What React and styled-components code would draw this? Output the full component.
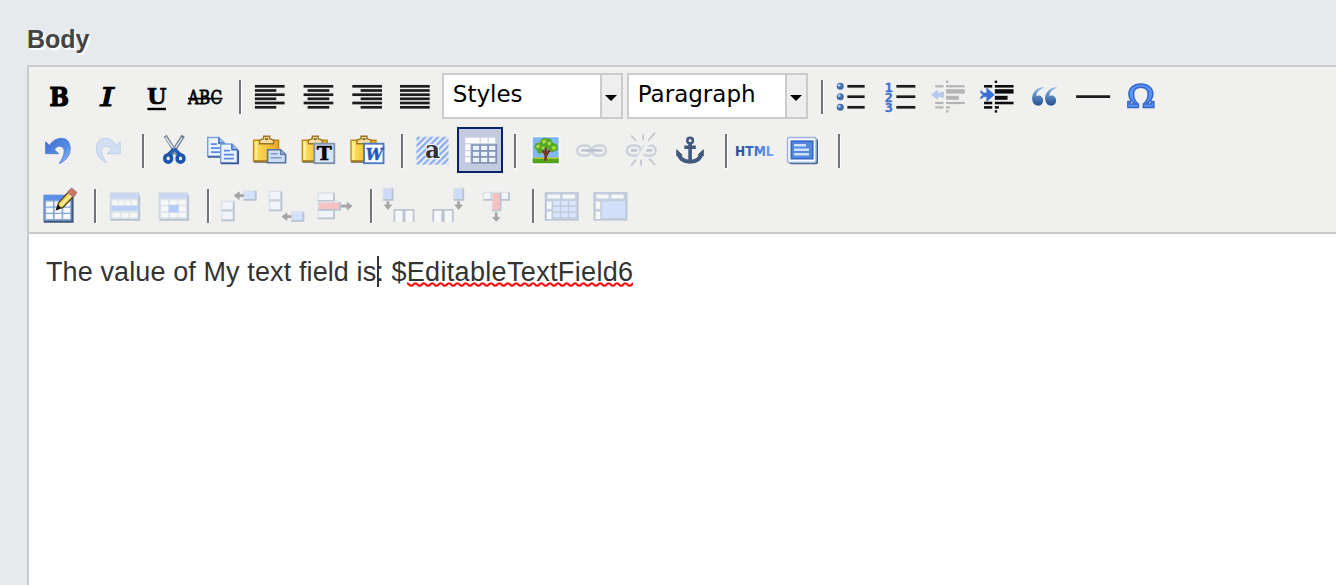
import React from 'react';
import styled, { createGlobalStyle } from 'styled-components';

const GlobalStyle = createGlobalStyle`
  html, body { margin: 0; padding: 0; }
  body { background: #e6eaed; overflow: hidden; font-family: "Liberation Sans", Arial, sans-serif; }
`;

const Page = styled.main`
  display: flex;
  flex-direction: column;
  height: 585px;
  padding-left: 27px;
  box-sizing: border-box;
  overflow: hidden;
`;

const FieldLabel = styled.label`
  height: 41px;
  padding-top: 24px;
  font-size: 25px;
  line-height: 30px;
  font-weight: bold;
  color: #444;
  text-shadow: 2px 2px 0 #fff;
`;

const Editor = styled.section`
  flex: 1;
  display: flex;
  flex-direction: column;
  border: solid #c9cacb;
  border-width: 2px 0 0 2px;
  background: #fff;
`;

const Toolbar = styled.div`
  display: flex;
  flex-direction: column;
  gap: 8.3px;
  height: 159px;
  padding: 6px 0 0 5.85px;
  background: #f0f0ee;
  border-bottom: 2px solid #c9cacb;
`;

const ToolRow = styled.div`
  display: flex;
  align-items: center;
  height: 46px;
  flex: none;
`;

const ToolButton = styled.button`
  flex: none;
  display: grid;
  place-items: center;
  box-sizing: border-box;
  width: 46px;
  height: 46px;
  margin: 0 1.15px;
  padding: 0;
  border: 2px solid ${(p) => (p.$active ? '#0a246a' : 'transparent')};
  background: ${(p) => (p.$active ? '#c2cbe0' : 'transparent')};
`;

const Glyph = styled.svg`
  display: block;
  width: 44px;
  height: 44px;
  margin: -1px;
  overflow: visible;
`;

const Separator = styled.span`
  flex: none;
  width: 2px;
  height: 34px;
  margin: 2px 4.6px 0 ${(p) => p.$before || 10.6}px;
  background: #76717a;
  box-shadow: 1px 1px 0 #fff;
`;

const Select = styled.div`
  flex: none;
  display: flex;
  box-sizing: border-box;
  width: 181px;
  height: 46px;
  margin-left: ${(p) => p.$gap}px;
  border: 2px solid #ccc;
  background: #fff;
`;

const SelectValue = styled.span`
  flex: 1;
  padding-left: 9px;
  font: 23px/38px "DejaVu Sans", Verdana, sans-serif;
  color: #000;
`;

const SelectArrow = styled.span`
  display: flex;
  align-items: center;
  justify-content: center;
  width: 19px;
  border-left: 2px solid #ccc;
  background: #eee;
  &::after {
    content: '';
    margin-top: 4px;
    border: solid transparent;
    border-width: 6px 6px 0;
    border-top-color: #000;
  }
`;

const Content = styled.div`
  flex: 1;
  padding: 22px 0 0 17px;
  font-size: 27px;
  letter-spacing: 0.11px;
  line-height: 32px;
  color: #333;
  white-space: pre;
`;

const Caret = styled.span`
  position: relative;
  &::after {
    content: '';
    position: absolute;
    left: 1px;
    top: -1px;
    width: 2px;
    height: 31px;
    background: #333;
  }
`;

const Misspelled = styled.span`
  position: relative;
  letter-spacing: 0.34px;
`;

const Squiggle = styled.svg`
  position: absolute;
  left: 0;
  top: 25px;
  width: 100%;
  height: 5px;
`;

const INK = '#1c1c1c';
const BLUE = '#3b6fd4';
const SERIF = '"DejaVu Serif", serif';

const Bars = ({ rows, w = 2.7, color = INK }) => (
  <g stroke={color} strokeWidth={w}>
    {rows.map(([x1, x2, y, sw]) => <path key={`${x1}-${y}`} d={`M${x1} ${y}H${x2}`} strokeWidth={sw || w} />)}
  </g>
);

const alignYs = [86.3, 90.5, 94.7, 98.8, 103, 107.3];
const alignBars = (long, short) => alignYs.map((y, i) => [...(i % 2 ? short : long), y]);

const Letter = ({ x, y, size, w, children, ...rest }) => (
  <text x={x} y={y} fontSize={size} textLength={w} lengthAdjust="spacingAndGlyphs" fontFamily={SERIF} fontWeight="bold" fill="#000" {...rest}>{children}</text>
);

const Clipboard = ({ x }) => (
  <g transform={`translate(${x} 135)`}>
    <path d="M1 5.5H26V26H1z" fill="url(#gold)" stroke="#c08a17" strokeWidth="1.4" />
    <path d="M3.5 7V25" stroke="#fff3a2" strokeWidth="2" />
    <path d="M7 9V5.5L11 4V1.5H17V4L21 5.5V9Z" fill="#f5dfa0" stroke="#9b7527" strokeWidth="1.4" />
    <path d="M12.5 4.4h3" stroke="#8b6b2d" strokeWidth="2" />
    <path d="M1 27.3H15" stroke="#7a6942" strokeWidth="1.6" />
  </g>
);

const Sheet = ({ x, y }) => (
  <g transform={`translate(${x} ${y})`}>
    <path d="M.8 .8H12L17.5 6V19.5H.8Z" fill="#eaf2ff" stroke="#7ba0dc" strokeWidth="1.5" />
    <path d="M12 1V6.5H17.5" fill="#9bbcf0" stroke="#3668b8" strokeWidth="1.4" />
    <path d="M4 7.5h6M4 11.5h10M4 15.5h10" stroke="#5c8ce0" strokeWidth="1.7" />
    <path d="M1 20.3H18.3V7" fill="none" stroke="#38578f" strokeWidth="1.7" />
  </g>
);

const dent = (o) => [
  [o - 10.5, o - 2.3, 86.3], [o + .3, o + 19, 86.3], [o + .3, o + 19, 91.4, 4.4],
  [o + .3, o + 13, 97.8, 4], [o - 10.5, o - 2.3, 103], [o + .3, o + 19, 103],
  [o - 10.5, o - 2.3, 107.4], [o + .3, o + 4.3, 107.4], [o + .2, o + 2.6, 81.8, 2.4], [o + .2, o + 2.6, 111.4, 2.4],
];

const Cell = ({ x, y, w = 12, h = 9, fill = '#f1f4f8' }) => (
  <g>
    <rect x={x} y={y} width={w} height={h} fill={fill} stroke="#dde2e9" strokeWidth="1.4" />
    <path d={`M${x} ${y + h}h${w}v${-h}`} fill="none" stroke="#b9c3cf" strokeWidth="1.8" />
  </g>
);

const OpenCell = ({ x, y }) => (
  <g>
    <rect x={x} y={y} width="9" height="12" fill="#f6f7f8" />
    <path d={`M${x} ${y + 12}V${y}h9V${y + 12}`} fill="none" stroke="#bcc6d1" strokeWidth="1.8" />
  </g>
);

const PaleTable = ({ x, children }) => (
  <g transform={`translate(${x} 192)`}>
    <rect x=".8" y=".8" width="28" height="26" fill="#dfe5ed" stroke="#ccd7e6" strokeWidth="1.5" />
    <rect x="1" y="1" width="27.5" height="5" fill="#c8d8f2" />
    <path d="M1 27.5H29.5V3" fill="none" stroke="#b8c2cd" strokeWidth="1.8" />
    {children}
  </g>
);

const Grid = ({ x, y, cols, rows, w, h, px, py, fill }) => (
  <g fill={fill}>
    {Array.from({ length: cols * rows }, (_, i) => (
      <rect key={i} x={x + (i % cols) * px} y={y + Math.floor(i / cols) * py} width={w} height={h} rx=".6" />
    ))}
  </g>
);

const GreyArrow = ({ d, head }) => (
  <g><path d={d} stroke="#a5a5a5" strokeWidth="2.8" fill="none" /><path d={head} fill="#a5a5a5" stroke="#a5a5a5" strokeWidth=".8" /></g>
);

const chain = (x, y) => (
  <g transform={`translate(${x} ${y})`} fill="none">
    <path d="M6.5 1.5H10C13 1.5 14.5 4 14.5 6.5S13 11.5 10 11.5H5.5C2.5 11.5 .8 9 .8 6.5S3 1.5 6.5 1.5Z" stroke="#ccd2db" strokeWidth="2.5" />
    <path d="M5 6.5H11" stroke="#bcc4d0" strokeWidth="2.5" />
  </g>
);

/* Every glyph is plotted on one toolbar-sized sheet; a button shows its own 44px window of it. */
const glyphs = {
  bold: <Letter x="49.5" y="106" size="25.5" w="19.5" stroke="#000" strokeWidth="1.2">B</Letter>,
  italic: <Letter x="99.3" y="106" size="25.5" w="14.5" fontWeight="normal" stroke="#000" strokeWidth="1.1" transform="translate(21.5 0) skewX(-12)">I</Letter>,
  underline: <><Letter x="146.5" y="103.5" size="22.5" w="19.5" stroke="#000" strokeWidth=".6">U</Letter><path d="M147 109H165.5" stroke="#000" strokeWidth="2.4" /></>,
  strike: <><Letter x="188" y="104" size="18.5" w="34" fontWeight="normal" stroke="#000" strokeWidth=".8">ABC</Letter><path d="M188 98.6H222.5" stroke="#000" strokeWidth="1.8" /></>,
  left: <Bars rows={alignBars([255.3, 285], [255.3, 276.7])} />,
  center: <Bars rows={alignBars([303.3, 333], [307.3, 329])} />,
  right: <Bars rows={alignBars([352.3, 382], [360.6, 382])} />,
  full: <Bars rows={alignBars([400.3, 430], [400.3, 430])} />,
  bullets: <><Bars rows={[86.3, 96.7, 107.3].map((y) => [847.7, 865, y])} />{[86.3, 96.7, 107.3].map((y) => <g key={y}><circle cx="840.6" cy={y} r="3.5" fill="#416eae" /><circle cx="839.6" cy={y - 1} r="1.4" fill="#b4cbea" /></g>)}</>,
  numbers: <><Bars rows={[86.3, 96.7, 107.3].map((y) => [896, 915, y])} />{[1, 2, 3].map((n) => <Letter key={n} x="884.5" y={81.2 + n * 10.4} size="12" w="8" fill={BLUE} stroke={BLUE} strokeWidth=".3" fontFamily='"DejaVu Sans Mono", monospace'>{n}</Letter>)}</>,
  outdent: <><Bars rows={dent(945.7)} w={2.2} color="#b4b4b4" /><path d="M931 94.8L938 89.5V93L944 91.5V98L938 96.7V100Z" fill="#b6c9ed" /></>,
  indent: <><Bars rows={dent(994.8)} w={2.6} color="#0c0c0c" /><path d="M994.5 94.8L987 88V93H984L981 90.5V93L983.5 94.8L981 96.7V99L984 96.7H987V101.5Z" fill={BLUE} stroke={BLUE} strokeWidth=".6" /></>,
  quote: [1033, 1046].map((x) => <path key={x} d={`M${x + 11} 87C${x + 2} 88 ${x - 1.5} 95 ${x} 101C${x + 1.5} 107.5 ${x + 10.7} 107 ${x + 10.7} 100.5C${x + 10.7} 96 ${x + 6.5} 94.5 ${x + 4} 96C${x + 4} 92 ${x + 7} 89.5 ${x + 11} 88Z`} fill="url(#ink)" />),
  rule: <path d="M1076 96.7H1110" stroke={INK} strokeWidth="2.8" />,
  omega: <path d="M1128 107.5V101.5H1130.5V104H1135.5C1131 101 1129 98 1129 94C1129 88 1134 84 1141 84S1153 88 1153 94C1153 98 1151 101 1146.5 104H1151.5V101.5H1154V107.5H1143.5V104C1147 101.5 1148.3 98.5 1148.3 94C1148.3 89.5 1145.5 87.2 1141 87.2S1133.7 89.5 1133.7 94C1133.7 98.5 1135 101.5 1138.5 104V107.5Z" fill="#5c93f2" stroke="#3468cd" strokeWidth="1.5" />,

  undo: <path d="M45.5 142L49.5 145.5C55 137 66 136.5 69 143C72.5 151 68.5 160.5 59 164C64 157 66.5 149 61.5 147C58.5 145.8 56 147.5 54.5 150L58.5 154H45.5Z" fill="url(#azure)" stroke="#4f7ed8" strokeWidth=".8" />,
  redo: <path d="M120.5 142L116.5 145.5C111 137 101 136.5 98 143C94.5 151 98 159.5 107 163C102 157 99.5 149 104.5 147C107.5 145.8 110 147.5 111.5 150L107.5 154H120.5Z" fill="#d2def2" stroke="#bfcfeb" strokeWidth="1" />,
  cut: <><path d="M165 136L177 155" stroke="#8593a4" strokeWidth="3.8" /><path d="M183 136L171 155" stroke="#677b91" strokeWidth="3.8" /><path d="M165.5 138L176 153M182 138L172 153" stroke="#edf2f8" strokeWidth="1.2" /><path d="M174 149L168 155M174 149L180 155" stroke="#265db0" strokeWidth="3.6" /><g fill="none" stroke="#1c54b1" strokeWidth="3.6"><ellipse cx="168" cy="158.7" rx="3.4" ry="3.7" /><ellipse cx="180.3" cy="158.7" rx="3.4" ry="3.7" /></g></>,
  copy: <><Sheet x={207} y={137} /><Sheet x={220} y={143.5} /></>,
  paste: <><Clipboard x={253} /><path d="M268 150H281L286 155V163H268Z" fill="#cfdef4" stroke="#55749f" strokeWidth="1.6" /><path d="M281 150V155H286" fill="#8ca6cc" stroke="#55749f" /><path d="M271 154h7M271 158h11" stroke="#7d9bc8" strokeWidth="1.5" /></>,
  pasteText: <><Clipboard x={301} /><rect x="314" y="144" width="20" height="19.5" fill="#d9e4f4" stroke="#7d93ad" strokeWidth="1.8" /><Letter x="316.5" y="160.5" size="18.5" w="15" stroke="#000" strokeWidth=".5">T</Letter></>,
  pasteWord: <><Clipboard x={350} /><rect x="364" y="144" width="19.5" height="19.5" fill="#fff" stroke="#4d7bc4" strokeWidth="1.9" /><Letter x="365.7" y="160" size="17.5" w="17" fill="#2359b6" stroke="#2359b6" strokeWidth=".5" fontStyle="italic">W</Letter></>,
  selectAll: <><rect x="417" y="137" width="32" height="28" fill="url(#hatch)" /><Letter x="425.5" y="158.5" size="25" w="15" fill="#333" stroke="#eef2fa" strokeWidth="2.4" paintOrder="stroke">a</Letter></>,
  table: <><rect x="465" y="138" width="30" height="5.5" fill="#fff" /><rect x="465" y="144.5" width="5" height="18" fill="#fff" /><rect x="471" y="144.5" width="26" height="19.5" fill="#8496b3" /><Grid x={472.7} y={146} cols={3} rows={3} w={6.2} h={4.3} px={8.1} py={6} fill="#eaf1ff" /><path d="M465 151H470M465 157H470M480 138V143M488 138V143" stroke="#c6d1e5" strokeWidth="1.2" /></>,
  image: <><rect x="531.5" y="136" width="29" height="29" fill="#fff" /><rect x="533" y="137.5" width="26" height="26" fill="#83b7f2" /><rect x="533" y="158.5" width="26" height="5" fill="#55a51b" /><path d="M534 158.5H559" stroke="#b5c823" strokeWidth="1.5" /><path d="M545.5 161C547 156 546.5 153 540 149.5M546.5 156C547.5 151.5 550 150 554 149M546.5 154L545.5 145" stroke="#73351c" strokeWidth="2.6" fill="none" /><g fill="#57a526"><path d="M541 140L544 138L551 139L553 143L557.5 145L558 150L553 152.5L550 150.5L546 148L543 150L542 154L538 153.5L537 150.5L534.5 148L536 143.5L540 143Z" /></g><g fill="#a4dc3d"><path d="M542 141L546 139.5L546.5 142.5L543.5 144.5Z" /><path d="M547.5 143L551 141.5L551.5 144.5L549 146Z" /><path d="M536 146L539.5 144.5L540.5 147.5L537.5 148.7Z" /><path d="M551.5 147L555.5 146L556.5 149L553.5 150.5Z" /><path d="M542 147L545 146.5L544.5 149L542 149.5Z" /></g></>,
  link: <>{chain(577, 144.2)}{chain(592, 144.2)}<path d="M587 150.7H598" stroke="#bac2ce" strokeWidth="2.6" /></>,
  unlink: <>{chain(626, 144.2)}{chain(641, 144.2)}<path d="M650 140L637 161" stroke="#f0f0ee" strokeWidth="4" /><path d="M643 134.5V140.5M655 133L648 141M631 136L636 141M641 160V166M649 159L655 165.5M636 160L631 166" stroke="#c2c7cf" strokeWidth="1.8" /></>,
  anchor: <g fill="none" stroke="#415a7c" strokeWidth="3.6"><circle cx="690.3" cy="140.8" r="2.8" strokeWidth="2.6" /><path d="M690.3 144V162M684.5 147.5H696" /><path d="M679 154C680 160 684.5 162 690.3 162S700.5 160 701.5 154" strokeWidth="4" /><path d="M677 156.5V150L682.5 155.5M703.5 156.5V150L698 155.5" fill="#415a7c" strokeWidth="1" /></g>,
  html: <text x="735.8" y="156.4" fontSize="14.8" fontWeight="bold" textLength="38.5" lengthAdjust="spacingAndGlyphs" fontFamily='"DejaVu Sans", sans-serif' fill="url(#fade)">HTML</text>,
  fullscreen: <><rect x="789" y="139" width="29" height="25.5" rx="2" fill="#435a79" /><rect x="787.5" y="137.7" width="28.5" height="25" rx="1.5" fill="#f7faff" stroke="#9bb5dc" strokeWidth="1.5" /><rect x="791.3" y="141.5" width="21.5" height="17.5" fill="#5488e0" stroke="#3969c2" strokeWidth="1.6" /><path d="M794 145.5H806M794 150H809M794 154.5H809" stroke="#cfe1ff" strokeWidth="2.4" /></>,

  tableProps: <><rect x="44" y="195" width="28" height="26" fill="#86a5d5" stroke="#6c8bbb" strokeWidth="1.3" /><rect x="44" y="194.5" width="28" height="5" fill="#5c90e6" /><Grid x={46} y={201} cols={3} rows={3} w={7} h={5} px={8.6} py={6.3} fill="#f5f9ff" /><path d="M44 221.3H72.6V196" fill="none" stroke="#3f597a" strokeWidth="2" /><path d="M56.5 209L58.5 202.5L70 190L75 194.5L63 207Z" fill="#f2ce55" stroke="#4b452e" strokeWidth="1.4" /><path d="M61 205L73 192" stroke="#fff0a3" strokeWidth="2" /><path d="M67.5 192L71.5 187.5L77 192L73 196.5Z" fill="#d17563" stroke="#a08078" /><path d="M56 210L58 204L61 207.5Z" fill="#111" /></>,
  rowProps: <PaleTable x={110.3}><Grid x={2.5} y={8} cols={4} rows={1} w={5} h={4.5} px={6.5} py={7} fill="#f7f7f5" /><rect x="1.5" y="13.5" width="27" height="5" fill="#bad0f5" /><Grid x={3} y={20.5} cols={3} rows={1} w={7} h={4.5} px={8.6} py={7} fill="#f7f7f5" /></PaleTable>,
  cellProps: <PaleTable x={158.5}><Grid x={2.5} y={7.8} cols={3} rows={3} w={7} h={4.5} px={8.8} py={6.3} fill="#f7f7f5" /><rect x="10" y="12.5" width="10" height="7.5" fill="#b4cdf6" /></PaleTable>,
  rowBefore: <><Cell x={222} y={201} /><Cell x={222} y={211} /><Cell x={244} y={190.5} fill="#d3e1fb" /><GreyArrow d="M237 195.2H244" head="M234.5 195.2L239.5 191.5V199Z" /></>,
  rowAfter: <><Cell x={270} y={191} /><Cell x={270} y={201} /><Cell x={292} y={211.5} fill="#d3e1fb" /><GreyArrow d="M285 216.2H292" head="M282.5 216.2L287.5 212.5V220Z" /></>,
  rowDelete: <><Cell x={318} y={192.5} w={16} h={8} /><Cell x={318} y={210} w={16} h={8} /><Cell x={318} y={201.5} w={22} h={8} fill="#f5c3c3" /><GreyArrow d="M341 205.7H350" head="M352 205.7L347 202V209.5Z" /></>,
  colBefore: <><Cell x={383.5} y={188} w={9.5} h={11.5} fill="#ccdcfa" /><GreyArrow d="M388.3 201V206" head="M388.3 209L384.7 204.5H392Z" /><OpenCell x={394.8} y={209.5} /><OpenCell x={405} y={209.5} /></>,
  colAfter: <><Cell x={453.5} y={188} w={9.5} h={11.5} fill="#ccdcfa" /><GreyArrow d="M458.3 201V206" head="M458.3 209L454.7 204.5H462Z" /><OpenCell x={433} y={209.5} /><OpenCell x={443.5} y={209.5} /></>,
  colDelete: <><Cell x={483.5} y={192} w={8} h={7.5} /><Cell x={501} y={192} w={8} h={7.5} /><Cell x={492} y={192} w={8.5} h={18} fill="#f5c1c1" /><GreyArrow d="M496.2 212V218" head="M496.2 221L492.5 217H500Z" /></>,
  split: <><rect x="546" y="192.5" width="32.5" height="27" fill="#c5cfdd" stroke="#bac6d7" strokeWidth="1.5" /><Grid x={548} y={194} cols={2} rows={1} w={12.5} h={4} px={15} py={7} fill="#f6f7f7" /><Grid x={547.5} y={201} cols={1} rows={2} w={4.5} h={7.5} px={6} py={10} fill="#f6f7f7" /><Grid x={554} y={200.5} cols={3} rows={3} w={6.3} h={4} px={8} py={6.2} fill="#dae6fd" /></>,
  merge: <><rect x="594" y="192.5" width="32.5" height="27" fill="#c5cfdd" stroke="#bac6d7" strokeWidth="1.5" /><Grid x={596} y={194} cols={2} rows={1} w={12.5} h={4} px={15} py={7} fill="#f6f7f7" /><Grid x={595.5} y={201} cols={1} rows={2} w={4.5} h={7.5} px={6} py={10} fill="#f6f7f7" /><rect x="602" y="201" width="23" height="16.5" fill="#d3e0fa" /></>,
};

const groups = (spec) => spec.map(([start, names]) => names.map((name, i) => ({ name, cx: start + i * 48.3 })));

const row1 = groups([
  [59, ['bold', 'italic', 'underline', 'strike']],
  [269.4, ['left', 'center', 'right', 'full']],
  [851.35, ['bullets', 'numbers', 'outdent', 'indent', 'quote', 'rule', 'omega']],
]);
const row2 = groups([
  [59, ['undo', 'redo']],
  [172.8, ['cut', 'copy', 'paste', 'pasteText', 'pasteWord']],
  [431.5, ['selectAll', 'table']],
  [545.3, ['image', 'link', 'unlink', 'anchor']],
  [755.7, ['html', 'fullscreen']],
]);
const row3 = groups([
  [59, ['tableProps']],
  [124.5, ['rowProps', 'cellProps']],
  [238.3, ['rowBefore', 'rowAfter', 'rowDelete']],
  [400.4, ['colBefore', 'colAfter', 'colDelete']],
  [562.5, ['split', 'merge']],
]);

const Group = ({ items, cy }) => items.map(({ name, cx }) => (
  <ToolButton key={name} type="button" aria-label={name} $active={name === 'table'}>
    <Glyph viewBox={`${cx - 22} ${cy - 22} 44 44`}>{glyphs[name]}</Glyph>
  </ToolButton>
));

const Defs = styled.svg`
  position: absolute;
  width: 0;
  height: 0;
`;

export default function App() {
  return (
    <>
      <GlobalStyle />
      <Defs aria-hidden="true">
        <defs>
          <linearGradient id="gold"><stop stopColor="#ffe55f" /><stop offset="1" stopColor="#eaa526" /></linearGradient>
          <linearGradient id="ink" x1="0" y1="0" x2="0" y2="1"><stop stopColor="#8db9ec" /><stop offset="1" stopColor="#24508f" /></linearGradient>
          <linearGradient id="azure" x1="0" y1="0" x2="1" y2="1"><stop stopColor="#3d70ce" /><stop offset=".6" stopColor="#568be4" /><stop offset="1" stopColor="#a4c4fa" /></linearGradient>
          <linearGradient id="fade"><stop stopColor="#244a92" /><stop offset=".6" stopColor="#4377d2" /><stop offset="1" stopColor="#7baaff" /></linearGradient>
          <pattern id="hatch" width="6.4" height="6.4" patternUnits="userSpaceOnUse">
            <path d="M-1 7.4L7.4 -1M-1 1L1 -1M5.4 7.4L7.4 5.4" stroke="#85aaf5" strokeWidth="2.2" />
          </pattern>
          <pattern id="squiggle" width="8.4" height="5" patternUnits="userSpaceOnUse">
            <path d="M-2.1 2.5Q0 -.1 2.1 2.5T6.3 2.5T10.5 2.5" fill="none" stroke="#f00" strokeWidth="2" />
          </pattern>
        </defs>
      </Defs>
      <Page>
        <FieldLabel>Body</FieldLabel>
        <Editor>
          <Toolbar>
            <ToolRow>
              <Group items={row1[0]} cy={96} /><Separator />
              <Group items={row1[1]} cy={96} />
              <Select $gap={3.5}><SelectValue>Styles</SelectValue><SelectArrow /></Select>
              <Select $gap={4}><SelectValue>Paragraph</SelectValue><SelectArrow /></Select>
              <Separator $before={12.8} />
              <Group items={row1[2]} cy={96} />
            </ToolRow>
            <ToolRow>
              {row2.map((items, i) => <React.Fragment key={i}><Group items={items} cy={150.3} /><Separator /></React.Fragment>)}
            </ToolRow>
            <ToolRow>
              {row3.map((items, i) => <React.Fragment key={i}>{i > 0 && <Separator />}<Group items={items} cy={204.6} /></React.Fragment>)}
            </ToolRow>
          </Toolbar>
          <Content>
            The value of My text field is<Caret />: $<Misspelled>EditableTextField6<Squiggle><rect width="100%" height="5" fill="url(#squiggle)" /></Squiggle></Misspelled>
          </Content>
        </Editor>
      </Page>
    </>
  );
}
